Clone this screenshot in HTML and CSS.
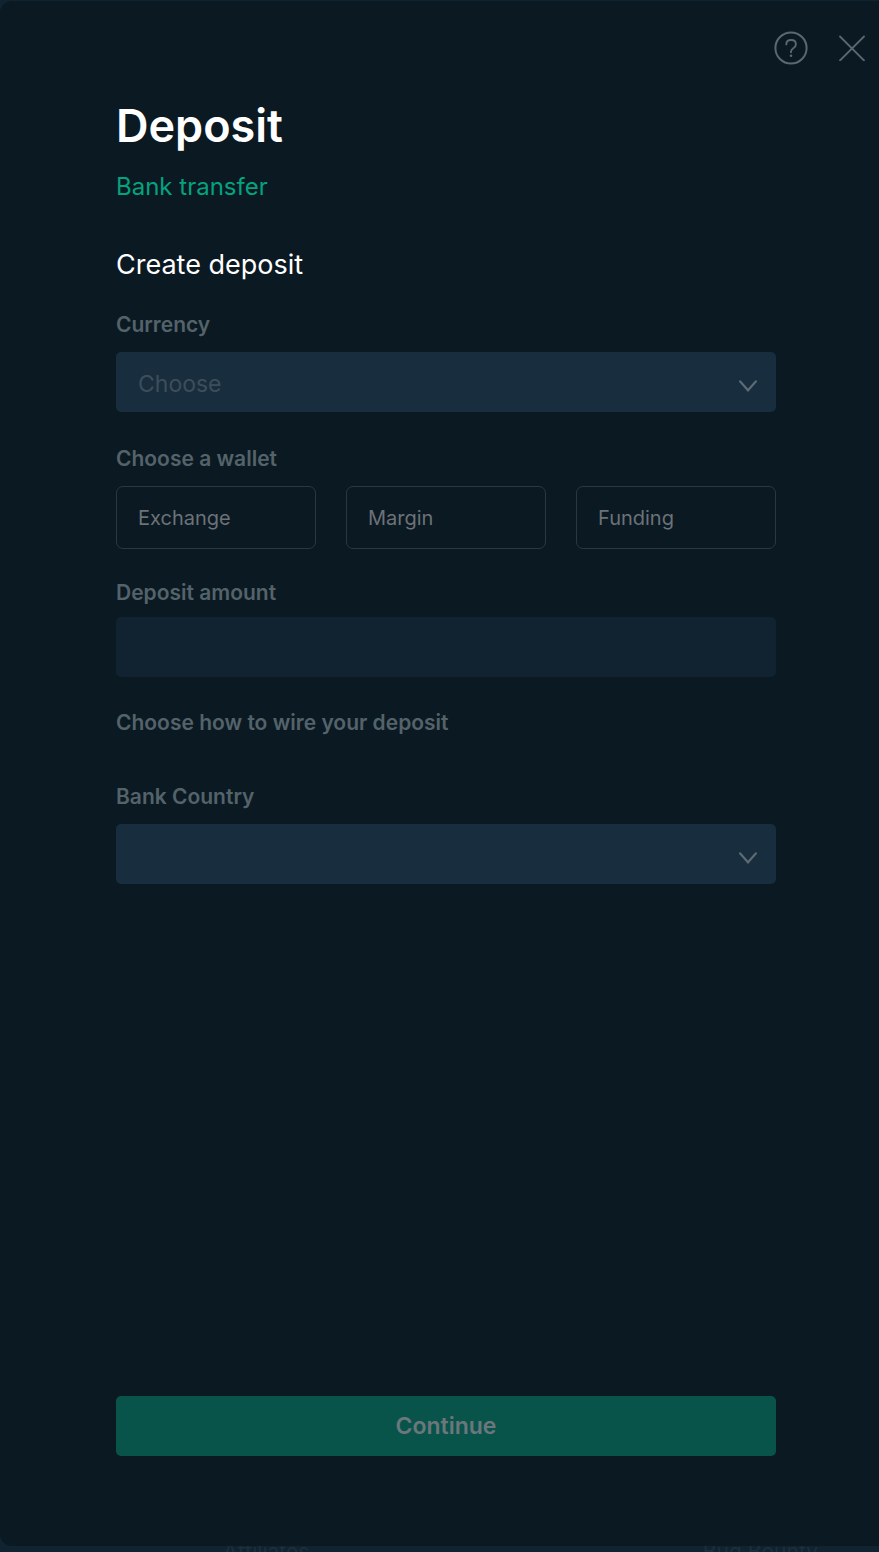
FILE: index.html
```html
<!DOCTYPE html>
<html lang="en">
<head>
<meta charset="utf-8">
<meta name="viewport" content="width=device-width, initial-scale=1">
<title>Deposit</title>
<link rel="stylesheet" href="styles.css">
</head>
<body>
<footer class="site-footer">
  <span>Affiliates</span>
  <span>Bug Bounty</span>
</footer>
<main class="dialog" role="dialog" aria-labelledby="dialog-title">
  <div class="toolbar">
    <button class="icon-button" type="button" aria-label="Help">
      <svg width="34" height="34" viewBox="0 0 34 34" fill="none" stroke="currentColor" stroke-width="2" stroke-linecap="round">
        <circle cx="17" cy="17" r="15.6"/>
        <path d="M12.3 13.4C12.3 10.6 14.3 9 17.1 9C19.9 9 21.9 10.7 21.9 13.2C21.9 15.3 20.8 16.3 19.3 17.3C17.7 18.4 17 19.2 17 20.7V21.3" stroke-width="1.9"/>
        <circle cx="17" cy="24.8" r="1.3" fill="currentColor" stroke="none"/>
      </svg>
    </button>
    <button class="icon-button" type="button" aria-label="Close">
      <svg width="26" height="26" viewBox="0 0 26 26" fill="none" stroke="currentColor" stroke-width="1.8" stroke-linecap="round">
        <path d="M1 1.5L25 25.5M25 1.5L1 25.5"/>
      </svg>
    </button>
  </div>
  <form class="form">
    <h1 class="title" id="dialog-title">Deposit</h1>
    <p class="method">Bank transfer</p>
    <h2 class="subtitle">Create deposit</h2>

    <div class="field">
      <label class="label" for="currency">Currency</label>
      <div class="select-wrap">
        <select class="control select" id="currency">
          <option>Choose</option>
        </select>
        <svg class="chevron" width="20" height="14" viewBox="0 0 20 14" fill="none" stroke="currentColor" stroke-width="2.1" stroke-linecap="round"><path d="M2 2.3L10 11.3L18 2.3"/></svg>
      </div>
    </div>

    <div class="field field-wallet" role="group" aria-labelledby="wallet-label">
      <span class="label" id="wallet-label">Choose a wallet</span>
      <div class="wallets">
        <button class="wallet" type="button">Exchange</button>
        <button class="wallet" type="button">Margin</button>
        <button class="wallet" type="button">Funding</button>
      </div>
    </div>

    <div class="field field-amount">
      <label class="label" for="amount">Deposit amount</label>
      <input class="control input" id="amount" type="text">
    </div>

    <p class="label wire">Choose how to wire your deposit</p>

    <div class="field">
      <label class="label" for="country">Bank Country</label>
      <div class="select-wrap">
        <select class="control select" id="country">
          <option></option>
        </select>
        <svg class="chevron" width="20" height="14" viewBox="0 0 20 14" fill="none" stroke="currentColor" stroke-width="2.1" stroke-linecap="round"><path d="M2 2.3L10 11.3L18 2.3"/></svg>
      </div>
    </div>

    <button class="submit" type="submit">Continue</button>
  </form>
</main>
</body>
</html>
```

FILE: styles.css
```css
* {
  box-sizing: border-box;
}

body {
  margin: 0;
  min-height: 100vh;
  display: flex;
  flex-direction: column;
  padding: 1px 0 6px;
  position: relative;
  overflow: hidden;
  background: #102331;
  font-family: Inter, "Liberation Sans", sans-serif;
}

button,
input,
select {
  font-family: inherit;
}

h1,
h2,
p {
  margin: 0;
  font-weight: 400;
}

.site-footer {
  position: absolute;
  left: 0;
  right: 0;
  bottom: -12px;
  display: flex;
  justify-content: space-between;
  padding: 0 61px 0 223px;
  font-size: 21px;
  line-height: 24px;
  color: #1b303c;
}

.dialog {
  position: relative;
  flex: 1;
  display: flex;
  flex-direction: column;
  background: #0b1922;
  border-radius: 12px 0 0 12px;
}

.toolbar {
  display: flex;
  justify-content: flex-end;
  align-items: center;
  gap: 31px;
  padding: 30px 14px 0;
}

.icon-button {
  display: flex;
  padding: 0;
  border: 0;
  background: none;
  color: #5a6970;
}

.form {
  flex: 1;
  display: flex;
  flex-direction: column;
  padding: 33px 103px 90px 116px;
}

.title {
  font-size: 45px;
  line-height: 56px;
  font-weight: 600;
  color: #fff;
}

.method {
  margin-top: 18px;
  font-size: 24px;
  line-height: 30px;
  color: #03a37f;
}

.subtitle {
  margin-top: 46px;
  font-size: 27px;
  line-height: 34px;
  color: #fff;
}

.field {
  display: flex;
  flex-direction: column;
  gap: 14px;
  margin-top: 30px;
}

.field-wallet {
  margin-top: 34px;
}

.field-amount {
  gap: 11px;
  margin-top: 31px;
}

.label {
  font-size: 21px;
  line-height: 26px;
  font-weight: 600;
  color: #54636a;
}

.wire {
  margin-top: 33px;
}

.wire + .field {
  margin-top: 48px;
}

.select-wrap {
  display: grid;
  align-items: center;
}

.select-wrap > * {
  grid-area: 1 / 1;
}

.control {
  width: 100%;
  height: 60px;
  padding: 4px 22px 0;
  border: 0;
  border-radius: 5px;
  font-size: 23px;
  color: #3d4e5b;
}

.select {
  appearance: none;
  background: #182d3e;
}

.input {
  background: #112330;
}

.chevron {
  justify-self: end;
  margin: 7px 18px 0 0;
  color: #5c6b74;
  pointer-events: none;
}

.wallets {
  display: grid;
  grid-template-columns: repeat(3, 1fr);
  gap: 30px;
}

.wallet {
  height: 63px;
  padding: 0 21px;
  border: 1px solid #2b383f;
  border-radius: 7px;
  background: none;
  font-size: 20px;
  text-align: left;
  color: #6b7278;
}

.submit {
  height: 60px;
  margin-top: auto;
  border: 0;
  border-radius: 5px;
  background: #08544a;
  font-size: 23px;
  font-weight: 600;
  color: #6b777c;
}
```
